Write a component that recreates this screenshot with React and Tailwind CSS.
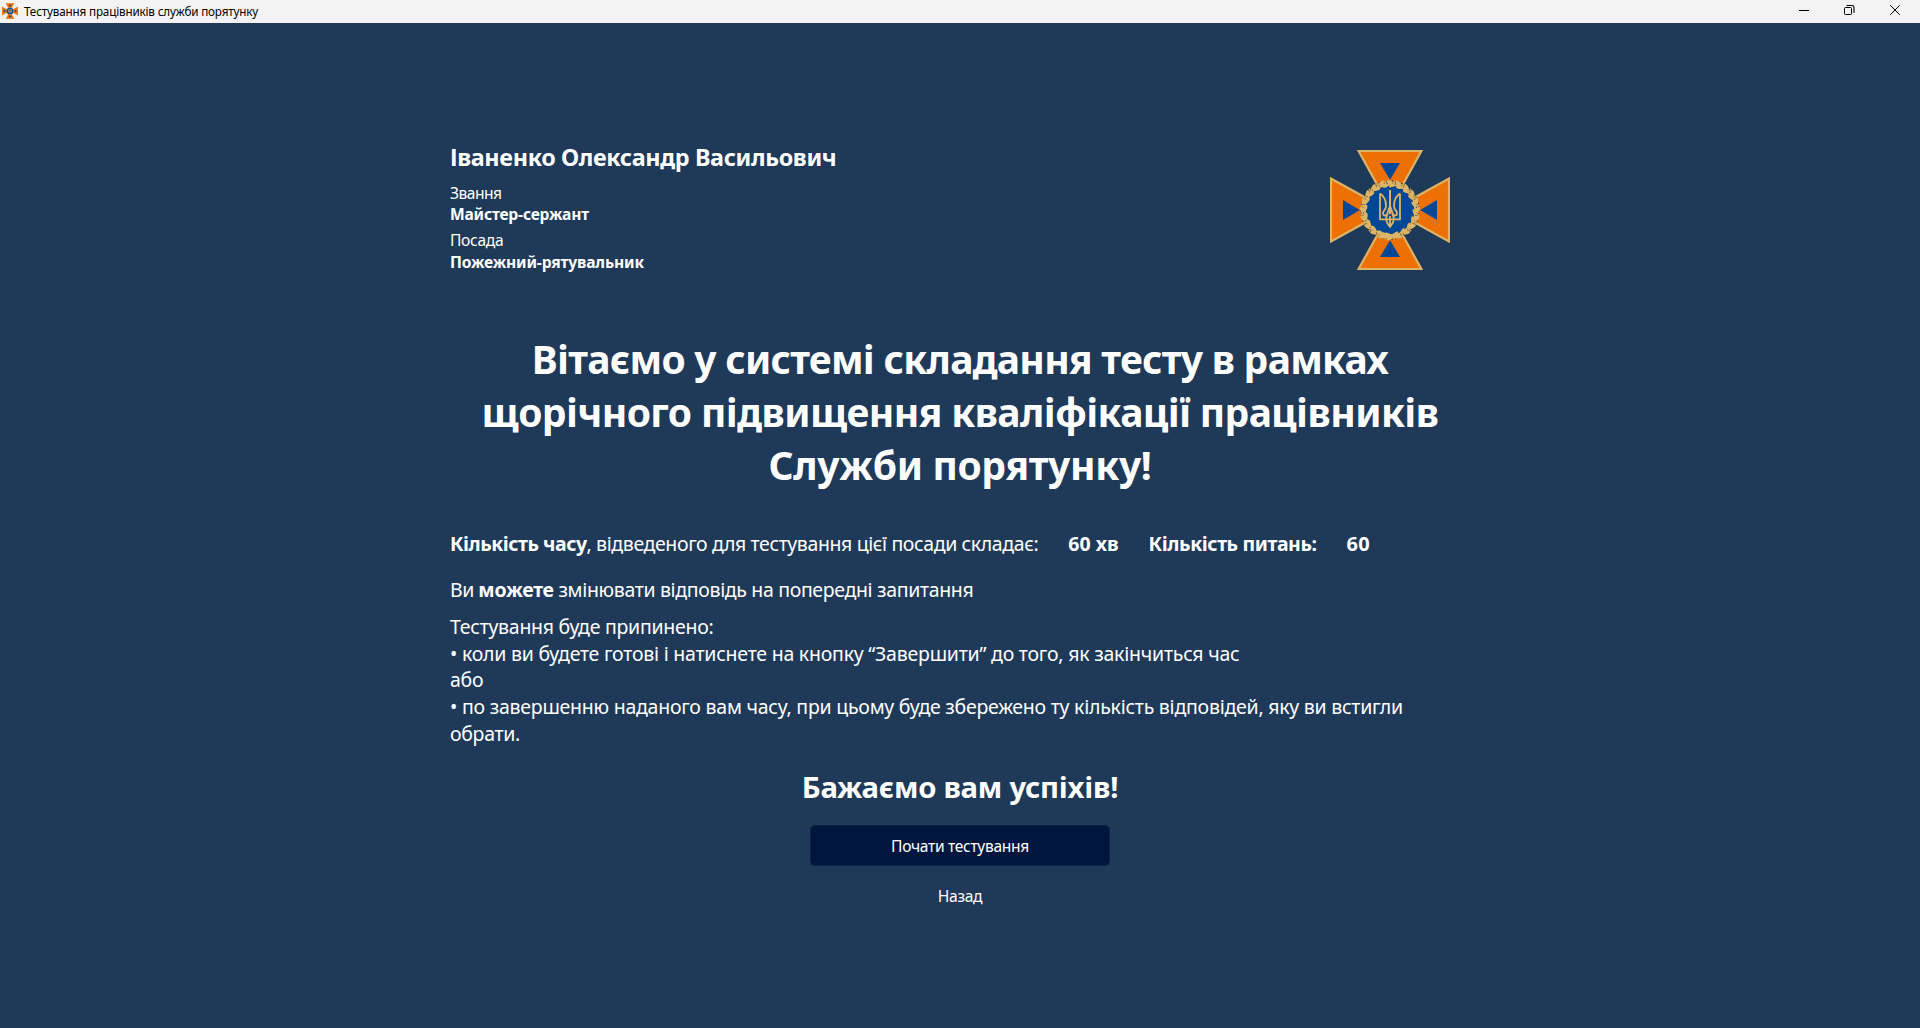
import React from 'react';

const GOLD = '#dcb466';
const ORANGE = '#ed7006';
const BLUE = '#004896';

const ring = Array.from({ length: 20 }, (_, i) => i * 18);

function Emblem({ className, small }) {
  return (
    <svg viewBox="0 0 120 120" className={className} aria-hidden="true">
      {[0, 90, 180, 270].map((a) => (
        <g key={a} transform={`rotate(${a} 60 60)`}>
          <path d="M28.6 1H91.4L71 38H49Z" fill={ORANGE} stroke={small ? ORANGE : GOLD} strokeWidth="2.2" />
          <path d="M50 13H70L60 29.8Z" fill={BLUE} />
        </g>
      ))}
      <circle cx="60" cy="60" r="27" fill={BLUE} />
      {small ? (
        <>
          <circle cx="60" cy="60" r="26" fill="none" stroke={GOLD} strokeWidth="5" strokeDasharray="8 6" />
          <path d="M50 46V68H70V46M60 42V76" fill="none" stroke={GOLD} strokeWidth="5" />
        </>
      ) : (
        <>
          <circle cx="60" cy="60" r="26.6" fill="none" stroke="#1d2a3c" strokeWidth="6" strokeDasharray="1.7 1.3" />
          <circle cx="60" cy="60" r="26.2" fill="none" stroke={GOLD} strokeWidth="3.8" />
          {ring.map((a, i) => (
            <g key={a} transform={`rotate(${a} 60 60)`} fill={GOLD}>
              <ellipse cx="60" cy="31.8" rx="3.5" ry="1.5" transform={`rotate(${i < 10 ? 20 : -20} 60 31.8)`} />
              <ellipse cx="62" cy="35.8" rx="3.2" ry="1.3" transform={`rotate(${i < 10 ? -18 : 18} 62 35.8)`} />
              <circle cx="64.6" cy="31.4" r="0.9" />
              <circle cx="57.2" cy="33.6" r="0.55" fill="#1d2a3c" />
              <circle cx="62.8" cy="33.2" r="0.45" fill="#5d4a22" />
            </g>
          ))}
          <path d="M53 82L60 85L67 82L69.5 88.5L62 88L60 90L58 88L50.5 88.5Z" fill={GOLD} />
          <g fill="none" stroke={GOLD} strokeWidth="1.8" strokeLinejoin="round">
            <path d="M50 43.5V69.4H70V43.5" />
            <path d="M50 43.5C54 46 56 50.5 56 56C56 60 53 60.5 53 63C53 66 56.5 66.5 58 63.5" />
            <path d="M70 43.5C66 46 64 50.5 64 56C64 60 67 60.5 67 63C67 66 63.5 66.5 62 63.5" />
            <path d="M60 40V64" strokeWidth="2" />
            <path d="M60 55C59.4 60 56 64 56.2 69.5C56.6 73 58.6 74.8 60 77C61.4 74.8 63.4 73 63.8 69.5C64 64 60.6 60 60 55" />
            <path d="M60 66V77" />
          </g>
        </>
      )}
    </svg>
  );
}

function TitleBar() {
  return (
    <header className="flex h-[23px] shrink-0 items-start justify-between bg-[#f3f3f3] text-black">
      <div className="flex items-start pl-0.5">
        <Emblem small className="mt-[3px] size-4" />
        <span className="ml-[6px] whitespace-nowrap text-[11.7px] leading-[22px] tracking-[-0.17px]">
          Тестування працівників служби порятунку
        </span>
      </div>
      <div className="flex pr-px">
        <svg width="46" height="20" viewBox="0 0 46 20" fill="none" stroke="#000" aria-hidden="true">
          <path d="M18 10.5H28" />
        </svg>
        <svg width="46" height="20" viewBox="0 0 46 20" fill="none" stroke="#000" aria-hidden="true">
          <rect x="17.5" y="7.5" width="7" height="7" rx="1" />
          <path d="M19.5 5.5H25a2 2 0 0 1 2 2V13" strokeWidth="1.1" />
        </svg>
        <svg width="46" height="20" viewBox="0 0 46 20" fill="none" stroke="#000" aria-hidden="true">
          <path d="M17.2 5.2L26.8 14.8M26.8 5.2L17.2 14.8" />
        </svg>
      </div>
    </header>
  );
}

function Profile() {
  return (
    <section className="flex items-start justify-between pr-5">
      <div className="whitespace-nowrap text-[15.6px] leading-[21px]">
        <h2 className="mb-[10px] text-[23.4px] leading-8 font-bold tracking-[-0.36px]">
          Іваненко Олександр Васильович
        </h2>
        <p className="tracking-[-0.5px]">Звання</p>
        <p className="font-bold tracking-[-0.19px]">Майстер-сержант</p>
        <p className="mt-[5px] tracking-[-0.32px]">Посада</p>
        <p className="mt-px font-bold tracking-[-0.147px]">Пожежний-рятувальник</p>
      </div>
      <Emblem className="mt-[9px] size-[120px]" />
    </section>
  );
}

function Rules() {
  return (
    <section className="whitespace-nowrap text-[19.5px] leading-[26.6px]">
      <div className="flex gap-[30px]">
        <p>
          <b className="tracking-[-0.48px]">Кількість часу</b>
          <span className="tracking-[-0.385px]">, відведеного для тестування цієї посади складає:</span>
        </p>
        <b>60 хв</b>
        <b className="tracking-[-0.4px]">Кількість питань:</b>
        <b className="text-[20px] tracking-[0.3px]">60</b>
      </div>
      <p className="mt-[19px]">
        <span className="tracking-[-0.5px]">Ви </span>
        <b className="tracking-[-0.24px]">можете</b>
        <span className="tracking-[-0.345px]"> змінювати відповідь на попередні запитання</span>
      </p>
      <div className="mt-[11px]">
        <p className="tracking-[-0.264px]">Тестування буде припинено:</p>
        <p className="tracking-[-0.228px]">
          • коли ви будете готові і натиснете на кнопку “Завершити” до того, як закінчиться час
        </p>
        <p className="tracking-[-0.3px]">або</p>
        <p className="tracking-[-0.245px]">
          • по завершенню наданого вам часу, при цьому буде збережено ту кількість відповідей, яку ви встигли
        </p>
        <p className="tracking-[-0.3px]">обрати.</p>
      </div>
    </section>
  );
}

export default function App() {
  return (
    <div className="flex h-[1028px] w-[1920px] flex-col overflow-hidden bg-[#1f3958] font-['Noto_Sans','Open_Sans',sans-serif] text-white">
      <TitleBar />
      <main className="mx-auto flex w-[1020px] flex-col pt-[118px]">
        <Profile />
        <h1 className="mt-[59px] text-center text-[39px] leading-[53px] font-bold whitespace-nowrap">
          <span className="block tracking-[-0.72px]">Вітаємо у системі складання тесту в рамках</span>
          <span className="block tracking-[-0.584px]">щорічного підвищення кваліфікації працівників</span>
          <span className="block tracking-[-0.325px]">Служби порятунку!</span>
        </h1>
        <div className="mt-[40px]">
          <Rules />
        </div>
        <div className="mt-[20px] flex flex-col items-center">
          <h2 className="text-[29.25px] leading-10 font-bold tracking-[-0.24px] whitespace-nowrap">Бажаємо вам успіхів!</h2>
          <button className="mt-[18px] h-[41px] w-[300px] rounded-[5px] border border-[#0b2246] bg-[#00163e] text-[15.6px] leading-5 tracking-[-0.33px]">
            Почати тестування
          </button>
          <button className="mt-[15px] h-[30px] text-[15.6px] leading-5 tracking-[-0.3px]">Назад</button>
        </div>
      </main>
    </div>
  );
}
